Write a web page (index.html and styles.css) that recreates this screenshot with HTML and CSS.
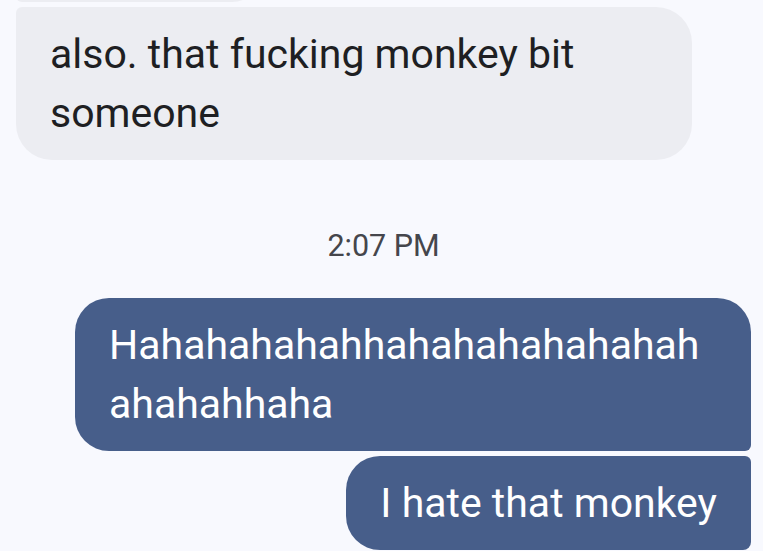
FILE: index.html
```html
<!DOCTYPE html>
<html>
<head>
<meta charset="utf-8">
<link rel="stylesheet" href="styles.css">
</head>
<body>
<div class="chat">
  <div class="bubble in prev"></div>
  <div class="bubble in wide last">also. that fucking monkey bit someone</div>
  <div class="stamp">2:07 PM</div>
  <div class="bubble out wide first">Hahahahahahhahahahahahahah ahahahhaha</div>
  <div class="bubble out last">I hate that monkey</div>
</div>
</body>
</html>
```
FILE: styles.css
```css
html, body {
  margin: 0;
  padding: 0;
  background: #f8f9fe;
  height: 100%;
  overflow: hidden;
}
.chat {
  display: flex;
  flex-direction: column;
  gap: 5px;
  padding: 0 12px 0 16px;
  font-family: Roboto, "Liberation Sans", sans-serif;
}
.bubble {
  box-sizing: border-box;
  max-width: 676px;
  padding: 17.5px 34px;
  font-size: 41px;
  line-height: 59px;
}
.in {
  align-self: flex-start;
  background: #ecedf2;
  color: #1e1f23;
  border-radius: 6px 36px 36px 6px;
}
.in.prev {
  width: 246px;
  height: 60px;
  margin-top: -58px;
  padding: 0;
  border-radius: 6px 30px 30px 6px;
}
.in.last {
  border-radius: 6px 36px 36px 36px;
}
.out {
  align-self: flex-end;
  background: #475e8a;
  color: #ffffff;
  border-radius: 34px 6px 6px 34px;
}
.out.first {
  border-radius: 34px 34px 6px 34px;
}
.out.last {
  border-radius: 34px 6px 8px 34px;
}
.wide {
  width: 676px;
}
.stamp {
  text-align: center;
  font-size: 30.5px;
  line-height: 40px;
  color: #45464c;
  margin: 61px 0 27px;
}
```
